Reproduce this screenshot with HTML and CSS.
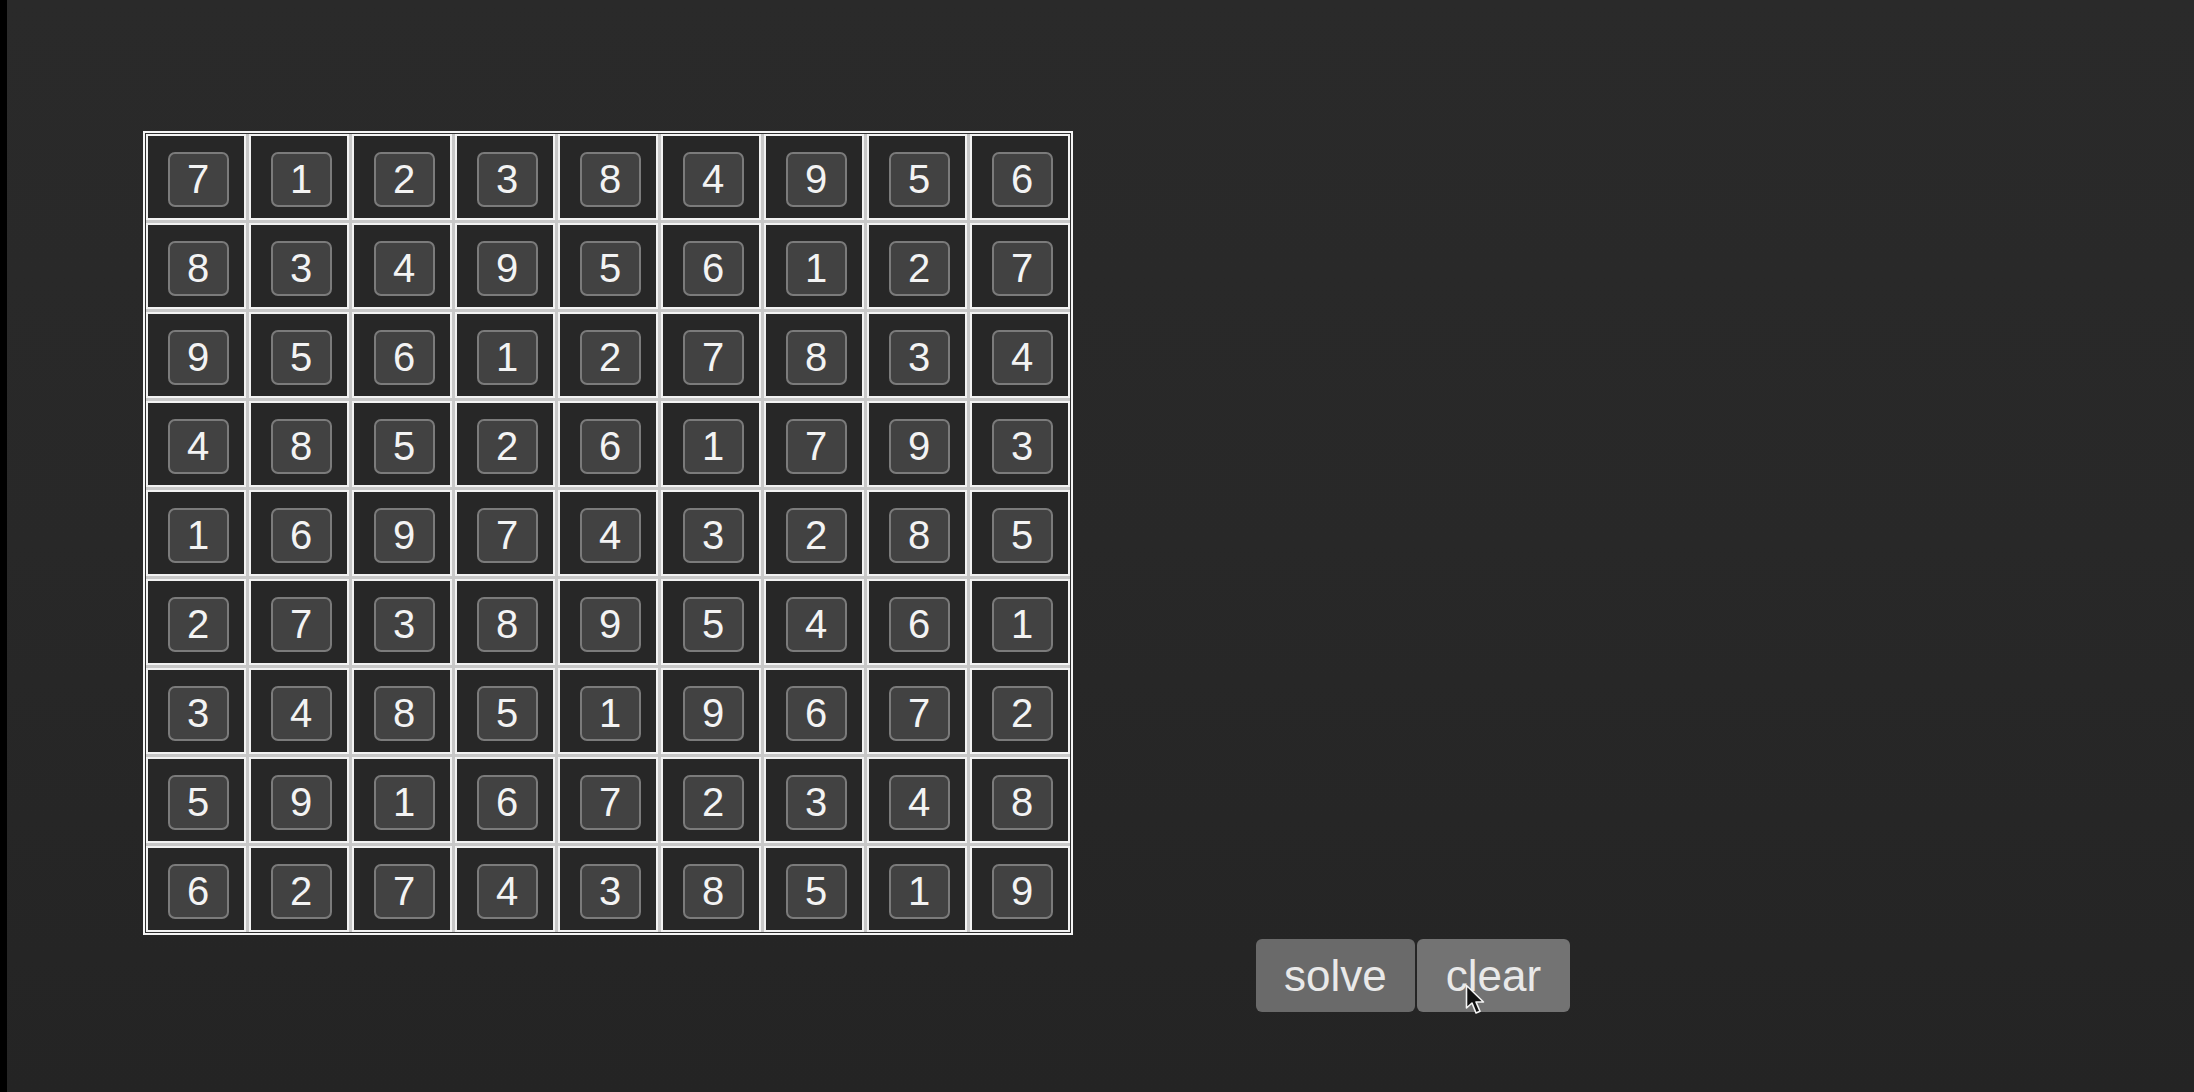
FILE: index.html
```html
<!DOCTYPE html>
<html>
<head>
<meta charset="utf-8">
<link rel="stylesheet" href="styles.css">
</head>
<body>
<div class="strip"></div>
<main class="main">
  <div class="board">
    <div class="cell"><span class="box">7</span></div><div class="cell"><span class="box">1</span></div><div class="cell"><span class="box">2</span></div><div class="cell"><span class="box">3</span></div><div class="cell"><span class="box">8</span></div><div class="cell"><span class="box">4</span></div><div class="cell"><span class="box">9</span></div><div class="cell"><span class="box">5</span></div><div class="cell"><span class="box">6</span></div>
    <div class="cell"><span class="box">8</span></div><div class="cell"><span class="box">3</span></div><div class="cell"><span class="box">4</span></div><div class="cell"><span class="box">9</span></div><div class="cell"><span class="box">5</span></div><div class="cell"><span class="box">6</span></div><div class="cell"><span class="box">1</span></div><div class="cell"><span class="box">2</span></div><div class="cell"><span class="box">7</span></div>
    <div class="cell"><span class="box">9</span></div><div class="cell"><span class="box">5</span></div><div class="cell"><span class="box">6</span></div><div class="cell"><span class="box">1</span></div><div class="cell"><span class="box">2</span></div><div class="cell"><span class="box">7</span></div><div class="cell"><span class="box">8</span></div><div class="cell"><span class="box">3</span></div><div class="cell"><span class="box">4</span></div>
    <div class="cell"><span class="box">4</span></div><div class="cell"><span class="box">8</span></div><div class="cell"><span class="box">5</span></div><div class="cell"><span class="box">2</span></div><div class="cell"><span class="box">6</span></div><div class="cell"><span class="box">1</span></div><div class="cell"><span class="box">7</span></div><div class="cell"><span class="box">9</span></div><div class="cell"><span class="box">3</span></div>
    <div class="cell"><span class="box">1</span></div><div class="cell"><span class="box">6</span></div><div class="cell"><span class="box">9</span></div><div class="cell"><span class="box">7</span></div><div class="cell"><span class="box">4</span></div><div class="cell"><span class="box">3</span></div><div class="cell"><span class="box">2</span></div><div class="cell"><span class="box">8</span></div><div class="cell"><span class="box">5</span></div>
    <div class="cell"><span class="box">2</span></div><div class="cell"><span class="box">7</span></div><div class="cell"><span class="box">3</span></div><div class="cell"><span class="box">8</span></div><div class="cell"><span class="box">9</span></div><div class="cell"><span class="box">5</span></div><div class="cell"><span class="box">4</span></div><div class="cell"><span class="box">6</span></div><div class="cell"><span class="box">1</span></div>
    <div class="cell"><span class="box">3</span></div><div class="cell"><span class="box">4</span></div><div class="cell"><span class="box">8</span></div><div class="cell"><span class="box">5</span></div><div class="cell"><span class="box">1</span></div><div class="cell"><span class="box">9</span></div><div class="cell"><span class="box">6</span></div><div class="cell"><span class="box">7</span></div><div class="cell"><span class="box">2</span></div>
    <div class="cell"><span class="box">5</span></div><div class="cell"><span class="box">9</span></div><div class="cell"><span class="box">1</span></div><div class="cell"><span class="box">6</span></div><div class="cell"><span class="box">7</span></div><div class="cell"><span class="box">2</span></div><div class="cell"><span class="box">3</span></div><div class="cell"><span class="box">4</span></div><div class="cell"><span class="box">8</span></div>
    <div class="cell"><span class="box">6</span></div><div class="cell"><span class="box">2</span></div><div class="cell"><span class="box">7</span></div><div class="cell"><span class="box">4</span></div><div class="cell"><span class="box">3</span></div><div class="cell"><span class="box">8</span></div><div class="cell"><span class="box">5</span></div><div class="cell"><span class="box">1</span></div><div class="cell"><span class="box">9</span></div>
  </div>
  <div class="actions">
    <button class="btn">solve</button>
    <button class="btn btn-hover">clear
      <svg class="cursor" width="22" height="32" viewBox="0 0 22 32"><path d="M1.5 1.5 L1.5 24 L7 19 L11 29 L15 27.3 L11 18 L18.5 18 Z" fill="#111" stroke="#f4f4f4" stroke-width="1.6" stroke-linejoin="round"/></svg>
    </button>
  </div>
</main>
</body>
</html>
```
FILE: styles.css
```css
html, body {
  margin: 0;
  padding: 0;
  height: 100%;
}
body {
  display: flex;
  background: linear-gradient(to bottom, #2a2a2a 0%, #282828 50%, #242424 100%);
  font-family: "Liberation Sans", Arial, sans-serif;
  overflow: hidden;
}
.strip {
  width: 7px;
  flex: none;
  background: #000;
}
.main {
  flex: 1;
  padding: 131px 0 0 136px;
}
.board {
  display: grid;
  grid-template-columns: repeat(9, 100px);
  grid-template-rows: repeat(9, 86px);
  gap: 3px;
  padding: 1px;
  width: max-content;
  border: 2px solid #f4f4f4;
  background: #c8c8c8;
  box-shadow: inset 0 0 0 1px #303030;
}
.cell {
  box-sizing: border-box;
  border: 2px solid #f2f2f2;
  background: #272727;
  display: flex;
  align-items: center;
  justify-content: center;
  padding: 4px 0 0 4px;
}
.box {
  box-sizing: border-box;
  width: 61px;
  height: 55px;
  border: 2px solid #7b7b7b;
  border-radius: 7px;
  background: #424242;
  color: #f3f3f3;
  font-size: 40px;
  line-height: 51px;
  text-align: center;
}
.actions {
  display: flex;
  gap: 2px;
  margin: 4px 0 0 1113px;
}
.btn {
  position: relative;
  height: 73px;
  padding: 0 28px;
  border: none;
  border-radius: 6px;
  background: #6a6a6a;
  color: #e9e9e9;
  font-family: "Liberation Sans", Arial, sans-serif;
  font-size: 44px;
  line-height: 73px;
}
.btn-hover {
  background: #737373;
  padding: 0 29px;
}
.cursor {
  position: absolute;
  left: 48px;
  top: 45px;
}
```
